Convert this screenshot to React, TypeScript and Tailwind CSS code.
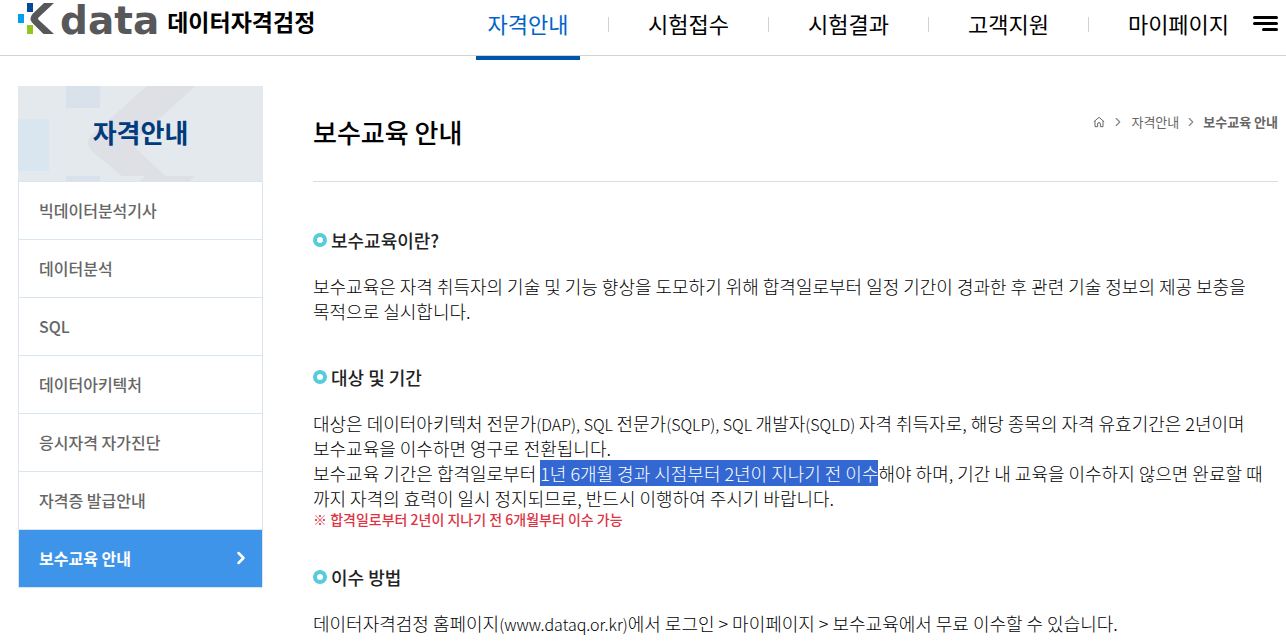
import React from 'react';
import { ChevronRight } from 'lucide-react';

const navItems = ['자격안내', '시험접수', '시험결과', '고객지원', '마이페이지'];

const sideItems = [
  '빅데이터분석기사',
  '데이터분석',
  'SQL',
  '데이터아키텍처',
  '응시자격 자가진단',
  '자격증 발급안내',
  '보수교육 안내',
];

function Logo() {
  return (
    <a href="#" aria-label="Kdata 데이터자격검정" className="flex h-10 shrink-0 items-center pl-[18px]">
      <svg width="38" height="40" viewBox="0 0 38 40" aria-hidden="true">
        <rect x="9" y="3" width="6" height="9" fill="#004b9b" />
        <rect x="0" y="14" width="6" height="9" fill="#00a0ea" />
        <rect x="9" y="25" width="6" height="9" fill="#93c521" />
        <path d="M26 3H36L20.5 17.5Q19.5 18.6 20.5 19.7L36 34H25.500L14.500 23Q10.500 18.800 14.500 14Z" fill="#58585a" />
      </svg>
      <span className="ml-1 pt-0.5 font-['DejaVu_Sans',sans-serif] text-[39px] leading-10 font-bold text-[#58585a]">data</span>
      <span className="ml-2 pt-0.5 text-[23px] leading-10 font-bold whitespace-nowrap text-black">데이터자격검정</span>
    </a>
  );
}

function Header() {
  return (
    <header className="flex h-14 items-start justify-between border-b border-[#d2d2d2] pr-2">
      <Logo />
      <div className="flex items-start">
        <nav aria-label="주 메뉴">
          <ul className="flex">
            {navItems.map((item, i) => (
              <li key={item} className="relative flex h-12 items-center">
                {i > 0 && <span className="h-[15px] w-px bg-[#d2d2d2]" />}
                <a
                  href="#"
                  className={
                    i === 0
                      ? 'w-40 pb-0.5 text-center text-[22px] leading-8 text-[#0064c8]'
                      : i === 4
                        ? 'w-[179px] pb-0.5 text-center text-[22px] leading-8 text-black'
                        : 'w-[159px] pb-0.5 text-center text-[22px] leading-8 text-black'
                  }
                >
                  {item}
                </a>
                {i === 0 && <span className="absolute top-14 left-7 h-1 w-[104px] bg-[#0055aa]" />}
              </li>
            ))}
          </ul>
        </nav>
        <button type="button" aria-label="전체 메뉴" className="-ml-[15px] mt-4">
          <svg width="25" height="15" viewBox="0 0 25 15" aria-hidden="true">
            <path d="M1.500 1.500H23.500M1.500 7.500H23.500M10.500 13.500H23.500" stroke="#000" strokeWidth="3" strokeLinecap="round" />
          </svg>
        </button>
      </div>
    </header>
  );
}

function Sidebar() {
  return (
    <aside className="w-[245px] shrink-0">
      <div className="relative flex h-[95px] items-center justify-center overflow-hidden bg-[#e4e9ed] pb-1">
        <svg className="absolute inset-0" width="245" height="95" viewBox="0 0 245 95" aria-hidden="true">
          <rect x="48" y="0" width="34" height="22" fill="#d9e1eb" />
          <rect x="0" y="33" width="31" height="52" fill="#d9e6ef" />
          <rect x="48" y="90" width="34" height="5" fill="#d9e1eb" />
          <path d="M129 0H177L117 55Q114 58 117 61L147 90H177L171 95H122L127 90H104L75 66Q65 56 75 48Z" fill="#dee0e5" />
        </svg>
        <h2 className="relative text-[26px] leading-10 font-bold text-[#003c7d]">자격안내</h2>
      </div>
      <ul className="border border-[#d9e6ef]">
        {sideItems.map((item, i) => (
          <li key={item} className={i > 0 ? 'border-t border-[#d9e6ef]' : ''}>
            {i === 6 ? (
              <a href="#" aria-current="page" className="flex h-[57px] items-center justify-between bg-[#3e94e9] pr-[11px] pb-0.5 pl-5 text-base font-bold text-white">
                {item}
                <ChevronRight size={20} strokeWidth={3} aria-hidden="true" />
              </a>
            ) : (
              <a href="#" className="flex h-[57px] items-center px-5 pb-0.5 text-base font-medium text-[#666]">
                {item}
              </a>
            )}
          </li>
        ))}
      </ul>
    </aside>
  );
}

function SectionTitle({ children }: { children: React.ReactNode }) {
  return (
    <h3 className="flex items-center gap-1 text-lg leading-7 font-medium text-[#222]">
      <span className="size-[14px] rounded-full border-4 border-[#55cbdc]" />
      {children}
    </h3>
  );
}

function Latin({ children }: { children: React.ReactNode }) {
  return <span className="text-base leading-none">{children}</span>;
}

export default function App() {
  return (
    <div className="font-['Noto_Sans_CJK_KR',sans-serif]">
      <Header />
      <div className="flex gap-[50px] pt-[30px] pr-2 pl-[18px]">
        <Sidebar />
        <main className="min-w-0 flex-1">
          <div className="flex h-24 items-center justify-between border-b border-[#dcdcdc] pb-1">
            <h1 className="text-[26px] leading-10 font-medium text-black">보수교육 안내</h1>
            <nav aria-label="현재 위치" className="mb-5 flex items-center text-[13px] leading-5 text-[#666]">
              <a href="#" aria-label="홈">
                <svg width="12" height="12" viewBox="0 0 12 12" fill="none" stroke="#666" aria-hidden="true">
                  <path d="M.8 5.800 6 1.300 11.200 5.800M2 5V10.700H4.600V8Q4.600 6.600 6 6.600T7.400 8V10.700H10V5" />
                </svg>
              </a>
              <ChevronRight size={14} className="mx-[6px] text-[#888]" aria-hidden="true" />
              <a href="#">자격안내</a>
              <ChevronRight size={14} className="mx-[5px] text-[#888]" aria-hidden="true" />
              <span className="font-bold">보수교육 안내</span>
            </nav>
          </div>

          <section className="pt-11">
            <SectionTitle>보수교육이란?</SectionTitle>
            <p className="mt-5 text-lg leading-[25px] font-light text-black">
              보수교육은 자격 취득자의 기술 및 기능 향상을 도모하기 위해 합격일로부터 일정 기간이 경과한 후 관련 기술 정보의 제공 보충을
              <br />
              목적으로 실시합니다.
            </p>
          </section>

          <section className="pt-[39px]">
            <SectionTitle>대상 및 기간</SectionTitle>
            <p className="mt-5 text-lg leading-[25px] font-light text-black">
              대상은 데이터아키텍처 전문가<Latin>(DAP), SQL </Latin>전문가<Latin>(SQLP), SQL </Latin>개발자<Latin>(SQLD) </Latin>자격 취득자로, 해당 종목의 자격 유효기간은 2년이며
              <br />
              보수교육을 이수하면 영구로 전환됩니다.
              <br />
              보수교육 기간은 합격일로부터 <mark className="bg-[#3367d1] text-white">1년 6개월 경과 시점부터 2년이 지나기 전 이수</mark>해야 하며, 기간 내 교육을 이수하지 않으면 완료할 때
              <br />
              까지 자격의 효력이 일시 정지되므로, 반드시 이행하여 주시기 바랍니다.
            </p>
            <p className="text-sm leading-4 font-medium text-[#dc3545]">※ 합격일로부터 2년이 지나기 전 6개월부터 이수 가능</p>
          </section>

          <section className="pt-9">
            <SectionTitle>이수 방법</SectionTitle>
            <p className="mt-5 text-lg leading-[25px] font-light text-black">
              데이터자격검정 홈페이지<Latin>(www.dataq.or.kr)</Latin>에서 로그인 &gt; 마이페이지 &gt; 보수교육에서 무료 이수할 수 있습니다.
            </p>
          </section>
        </main>
      </div>
    </div>
  );
}
